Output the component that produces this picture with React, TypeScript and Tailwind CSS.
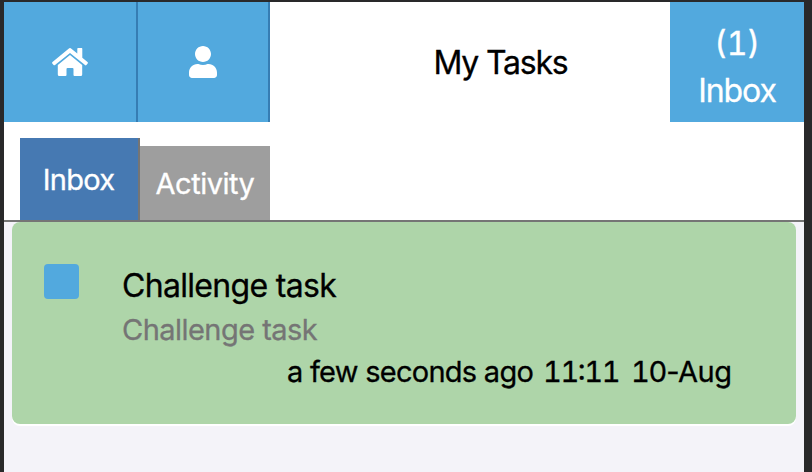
import { FaUser } from "react-icons/fa";

function HomeIcon() {
  return (
    <svg viewBox="0 0 36 28" className="mr-0.5 h-7 w-9" fill="currentColor">
      <path d="M16.6.7a2.2 2.2 0 0 1 2.8 0L25.3 5.6V.7q0-.7.7-.7h3.6q.7 0 .7.7v9l5.2 4.3q.8.7.2 1.4l-1.3 1.6q-.6.7-1.4.1L18 4.9 3 17q-.8.6-1.4-.1L.3 15.4q-.6-.7.2-1.4Z" />
      <path d="M18 7 30.2 17v9.5q0 1.5-1.5 1.5h-6.2q-1 0-1-1v-6q0-1-1-1h-5q-1 0-1 1v6q0 1-1 1h-6.2Q5.800 28 5.8 26.5V17Z" />
    </svg>
  );
}

function Header() {
  return (
    <header className="flex h-[120px] bg-white">
      <button className="flex w-[134px] items-center justify-center border-r-2 border-[#367db3] bg-[#52a9de] pl-px text-white">
        <HomeIcon />
      </button>
      <button className="flex w-[132px] items-center justify-center border-r-2 border-[#367db3] bg-[#52a9de] text-white">
        <FaUser className="size-8" />
      </button>
      <h1 className="flex flex-1 items-center justify-center pl-[61px] pt-0.5 text-[32px] tracking-[-1.2px]">
        My Tasks
      </h1>
      <button className="flex w-[134px] flex-col items-center bg-[#52a9de] pt-[17px] text-[32px] leading-[48px] text-white">
        <span className="pt-px tabular-nums">(1)</span>
        <span className="-mt-px tracking-[-1.1px]">Inbox</span>
      </button>
    </header>
  );
}

function Tabs() {
  return (
    <nav className="flex h-[100px] items-end border-b-2 border-[#757575] bg-white pl-4 text-[29px] text-white">
      <button className="h-[82px] w-[120px] border-r-2 border-[#757575] bg-[#4679b2] pr-px pt-0.5 tracking-[-0.7px]">
        Inbox
      </button>
      <button className="h-[74px] w-[130px] bg-[#9e9e9e] pt-0.5 tracking-[-0.5px]">Activity</button>
    </nav>
  );
}

function TaskCard() {
  return (
    <article className="mx-2 flex h-[202px] rounded-lg bg-[#aed5a9] pl-8 pt-[41.5px] shadow-[0_2px_0_white]">
      <span className="size-[35px] rounded bg-[#52a9de]" />
      <div className="ml-[43px] w-[609.5px]">
        <h2 className="text-[32px] leading-[44px] tracking-[-0.68px]">Challenge task</h2>
        <p className="text-[29px] leading-[44px] tracking-[-0.54px] text-[#757575]">Challenge task</p>
        <p className="flex justify-end text-[29px] leading-[40px]">
          <span className="mr-[2.500px] whitespace-pre tracking-[-0.73px]">a few seconds ago </span>
          <span className="mr-[5.500px] whitespace-pre tracking-[-1.4px] [font-feature-settings:'tnum','case']">11:11 </span>
          <span className="tabular-nums tracking-[-1.2px]">10</span>
          <span className="tracking-[-0.5px]">-Aug</span>
        </p>
      </div>
    </article>
  );
}

export default function App() {
  return (
    <main className="h-[472px] w-[812px] overflow-hidden border-l-4 border-r-8 border-t-2 border-[#29292a] bg-[#f4f3f9] font-['Inter',sans-serif] text-black [-webkit-text-stroke:0.3px]">
      <Header />
      <Tabs />
      <TaskCard />
    </main>
  );
}
